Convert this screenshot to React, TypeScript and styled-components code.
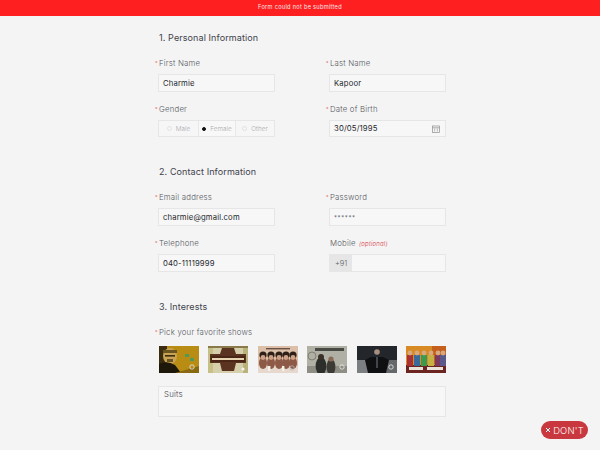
import React from 'react'
import styled, { createGlobalStyle } from 'styled-components'

const GlobalStyle = createGlobalStyle`
  html, body {
    margin: 0;
    padding: 0;
    background: #f4f4f4;
  }
  body {
    font-family: Inter, "Liberation Sans", sans-serif;
    color: #3c3f48;
  }
`

const Page = styled.div`
  height: 450px;
  overflow: hidden;
  background: #f4f4f4;
`

const Banner = styled.div`
  height: 16px;
  line-height: 15px;
  background: #fe2020;
  color: #fbe9e9;
  font-size: 5.6px;
  letter-spacing: 0.3px;
  text-align: center;
`

const Form = styled.form`
  width: 288px;
  margin: 0 0 0 158px;
`

const Section = styled.section<{ $top: number }>`
  padding-top: ${(props) => props.$top}px;
`

const Heading = styled.h2`
  margin: 0 0 13px 1px;
  height: 12px;
  font-size: 9px;
  line-height: 12px;
  font-weight: 400;
  letter-spacing: 0.1px;
  color: #3f424c;
`

const Grid = styled.div`
  display: grid;
  grid-template-columns: 117px 117px;
  column-gap: 54px;
  row-gap: 11px;
`

const Field = styled.div`
  display: flex;
  flex-direction: column;
`

const Label = styled.label`
  height: 12px;
  margin: 0 0 5px 1px;
  font-size: 7.8px;
  line-height: 12px;
  font-weight: 300;
  letter-spacing: 0.2px;
  color: #55585f;
  white-space: nowrap;
`

const Star = styled.span`
  display: inline-block;
  width: 4px;
  margin-left: -4px;
  font-size: 5px;
  vertical-align: 1px;
  color: #e0303a;
`

const Optional = styled.em`
  margin-left: 1px;
  font-size: 6px;
  color: #d8303a;
`

const Input = styled.div<{ $height?: number }>`
  box-sizing: border-box;
  height: ${(props) => props.$height ?? 18}px;
  display: flex;
  align-items: center;
  justify-content: space-between;
  padding: 0 5px 0 4px;
  background: #f7f7f7;
  border: 1px solid #e6e6e6;
  font-size: 7.7px;
  letter-spacing: 0.15px;
  color: #26282e;
`

const Dots = styled.span`
  font-size: 6px;
  letter-spacing: 0.6px;
  color: #55585f;
`

const RadioGroup = styled.div`
  box-sizing: border-box;
  height: 17px;
  display: grid;
  grid-template-columns: 39px 38px 1fr;
  background: #f6f6f6;
  border: 1px solid #e6e6e6;
`

const RadioOption = styled.div<{ $checked?: boolean }>`
  display: flex;
  align-items: center;
  justify-content: center;
  gap: 4px;
  font-size: 6.4px;
  font-weight: 300;
  color: #a9abae;
  border-left: ${(props) => (props.$checked ? '1px solid #e8e8e8' : 'none')};
  border-right: ${(props) => (props.$checked ? '1px solid #e8e8e8' : 'none')};
  background: ${(props) => (props.$checked ? '#f8f8f8' : 'transparent')};
`

const RadioDot = styled.span<{ $checked?: boolean }>`
  box-sizing: border-box;
  width: ${(props) => (props.$checked ? 4 : 5)}px;
  height: ${(props) => (props.$checked ? 4 : 5)}px;
  border-radius: 50%;
  border: ${(props) => (props.$checked ? '1px solid #111' : '1px solid #e2e2e2')};
  background: ${(props) => (props.$checked ? '#111' : 'transparent')};
`

const PhoneInput = styled.div`
  box-sizing: border-box;
  height: 18px;
  display: flex;
  background: #f7f7f7;
  border: 1px solid #e6e6e6;
`

const Prefix = styled.span`
  width: 22px;
  display: flex;
  align-items: center;
  justify-content: center;
  background: #e6e6e6;
  font-size: 7.4px;
  font-weight: 300;
  color: #55585f;
`

const Thumbs = styled.div`
  display: flex;
  justify-content: space-between;
  margin: 3px 0 13px 1px;
`

const Thumb = styled.svg`
  display: block;
  width: 40px;
  height: 27px;
  filter: blur(0.4px);
`

const TextArea = styled.div`
  box-sizing: border-box;
  height: 31px;
  padding: 1px 5px;
  background: #f7f7f7;
  border: 1px solid #e6e6e6;
  font-size: 7.8px;
  line-height: 12px;
  font-weight: 300;
  letter-spacing: 0.2px;
  color: #3c3f48;
`

const DontBadge = styled.div`
  position: absolute;
  left: 541px;
  top: 421px;
  width: 47px;
  height: 18px;
  display: flex;
  align-items: center;
  justify-content: center;
  gap: 2px;
  border-radius: 9px;
  background: #c8383e;
  color: #fff;
  font-size: 9.4px;
  font-weight: 300;
  letter-spacing: 0.2px;
`

const Ring = ({ x = 33, y = 21, color = '#e8e8e8' }: { x?: number; y?: number; color?: string }) => (
  <circle cx={x} cy={y} r={2.2} fill="none" stroke={color} strokeWidth={0.8} />
)

const BreakingBad = () => (
  <Thumb viewBox="0 0 40 27">
    <rect width="40" height="27" fill="#b98c14" />
    <rect width="8" height="27" fill="#3a2c0e" />
    <ellipse cx="11" cy="10" rx="7" ry="8" fill="#c9a354" />
    <rect x="4" y="4" width="14" height="3" fill="#6a5420" />
    <rect x="6" y="9" width="10" height="1.6" fill="#3b2e10" />
    <rect x="8" y="13" width="6" height="3" fill="#6a5424" />
    <path d="M0 27 V18 Q8 14 16 19 L22 27 Z" fill="#1e180a" />
    <rect x="26" y="8" width="4" height="3" fill="#4f9a58" />
    <rect x="31" y="12" width="4" height="3" fill="#4f9a58" />
    <path d="M16 27 L40 20 V27 Z" fill="#8a6a10" />
    <Ring />
  </Thumb>
)

const GameOfThrones = () => (
  <Thumb viewBox="0 0 40 27">
    <rect width="40" height="27" fill="#d6cfac" />
    <rect width="5" height="27" fill="#c6bf86" />
    <rect x="35" width="5" height="27" fill="#b9b27a" />
    <rect width="40" height="2" fill="#8a7a4a" />
    <path d="M14 2 H26 L28 8 H38 V17 H28 L26 25 H14 L12 17 H2 V8 H12 Z" fill="#5a3420" />
    <rect x="3" y="10" width="34" height="6" fill="#4a2616" />
    <rect x="4" y="12" width="32" height="2" fill="#e6d4b0" />
    <circle cx="35" cy="23" r="1.6" fill="#f4f4f0" />
  </Thumb>
)

const Friends = () => (
  <Thumb viewBox="0 0 40 27">
    <rect width="40" height="27" fill="#dcbfa8" />
    <rect x="8" y="2" width="24" height="1.4" fill="#6a5044" />
    <rect y="20" width="40" height="7" fill="#e6d8cc" />
    {[5, 13, 21, 28, 35].map((x) => (
      <g key={x}>
        <ellipse cx={x} cy={17} rx={4} ry={6} fill="#8c5a46" />
        <circle cx={x} cy={9} r={3.6} fill="#2e2018" />
        <circle cx={x} cy={11.5} r={2.4} fill="#cfa288" />
      </g>
    ))}
    <rect x="10" y="20" width="2.4" height="5" fill="#f4f0ea" />
    <rect x="24" y="20" width="2.4" height="5" fill="#f4f0ea" />
    <Ring x={34} y={22} color="#b8b8b8" />
  </Thumb>
)

const Sherlock = () => (
  <Thumb viewBox="0 0 40 27">
    <rect width="40" height="27" fill="#b0b0a4" />
    <rect y="20" width="40" height="7" fill="#8e8e84" />
    <rect x="8" y="2" width="29" height="3" fill="#4a4a44" />
    <circle cx="5" cy="10" r="4" fill="none" stroke="#6a6a60" strokeWidth="0.7" />
    <ellipse cx="14" cy="20" rx="5.4" ry="9" fill="#2c2e2c" />
    <circle cx="14" cy="11" r="3" fill="#3a3028" />
    <ellipse cx="24" cy="21" rx="4.4" ry="8" fill="#3c3a34" />
    <circle cx="24" cy="13" r="2.6" fill="#8a6a54" />
    <Ring x={35} y={21} />
  </Thumb>
)

const Suits = () => (
  <Thumb viewBox="0 0 40 27">
    <rect width="40" height="27" fill="#23262a" />
    <rect y="14" width="11" height="13" fill="#7c7f82" />
    <rect x="29" y="14" width="11" height="13" fill="#65686b" />
    <path d="M8 14 L14 11 H26 L32 14 L29 27 H11 Z" fill="#0f1012" />
    <circle cx="20" cy="6" r="2.8" fill="#a89080" />
    <rect x="19.2" y="11" width="1.6" height="11" fill="#50545a" />
    <Ring x={34} y={21} />
  </Thumb>
)

const BigBang = () => (
  <Thumb viewBox="0 0 40 27">
    <rect width="40" height="27" fill="#d88a24" />
    <rect x="26" width="14" height="18" fill="#c4601c" />
    <rect y="19" width="40" height="8" fill="#6c2420" />
    {[
      { x: 4, c: '#a83038' },
      { x: 11, c: '#3a6a9a' },
      { x: 18, c: '#3a9a50' },
      { x: 25, c: '#c8b040' },
      { x: 32, c: '#7a3a60' },
      { x: 37, c: '#5a5a8a' },
    ].map((p) => (
      <g key={p.x}>
        <rect x={p.x - 3} y={9} width={6} height={11} fill={p.c} />
        <circle cx={p.x} cy={7} r={2.4} fill="#d8a880" />
      </g>
    ))}
    <rect x="3" y="21" width="14" height="3" fill="#e8e2d8" />
    <rect x="21" y="21" width="16" height="3" fill="#e8e2d8" />
  </Thumb>
)

const CalendarIcon = () => (
  <svg width="8" height="8" viewBox="0 0 8 8" fill="none" stroke="#8b8d90" strokeWidth="0.7">
    <rect x="0.5" y="1" width="7" height="6.4" />
    <path d="M0.5 2.8 H7.5" />
    <path d="M2 4.2 H3.2 M4.8 4.2 H6 M2 5.8 H3.2 M4.8 5.8 H6" />
  </svg>
)

const Required = () => <Star>*</Star>

export default function App() {
  return (
    <Page>
      <GlobalStyle />
      <Banner>Form could not be submitted</Banner>
      <Form>
        <Section $top={16}>
          <Heading>1. Personal Information</Heading>
          <Grid>
            <Field>
              <Label><Required />First Name</Label>
              <Input>Charmie</Input>
            </Field>
            <Field>
              <Label><Required />Last Name</Label>
              <Input>Kapoor</Input>
            </Field>
            <Field>
              <Label><Required />Gender</Label>
              <RadioGroup>
                <RadioOption><RadioDot />Male</RadioOption>
                <RadioOption $checked><RadioDot $checked />Female</RadioOption>
                <RadioOption><RadioDot />Other</RadioOption>
              </RadioGroup>
            </Field>
            <Field>
              <Label><Required />Date of Birth</Label>
              <Input $height={17}>
                30/05/1995
                <CalendarIcon />
              </Input>
            </Field>
          </Grid>
        </Section>
        <Section $top={29}>
          <Heading>2. Contact Information</Heading>
          <Grid>
            <Field>
              <Label><Required />Email address</Label>
              <Input>charmie@gmail.com</Input>
            </Field>
            <Field>
              <Label><Required />Password</Label>
              <Input><Dots>******</Dots></Input>
            </Field>
            <Field>
              <Label><Required />Telephone</Label>
              <Input>040-11119999</Input>
            </Field>
            <Field>
              <Label>Mobile <Optional>(optional)</Optional></Label>
              <PhoneInput>
                <Prefix>+91</Prefix>
              </PhoneInput>
            </Field>
          </Grid>
        </Section>
        <Section $top={29}>
          <Heading>3. Interests</Heading>
          <Field>
            <Label><Required />Pick your favorite shows</Label>
            <Thumbs>
              <BreakingBad />
              <GameOfThrones />
              <Friends />
              <Sherlock />
              <Suits />
              <BigBang />
            </Thumbs>
            <TextArea>Suits</TextArea>
          </Field>
        </Section>
      </Form>
      <DontBadge>
        <svg width="6" height="6" viewBox="0 0 6 6" stroke="#fff" strokeWidth="1">
          <path d="M1 1 L5 5 M5 1 L1 5" />
        </svg>
        DON'T
      </DontBadge>
    </Page>
  )
}
